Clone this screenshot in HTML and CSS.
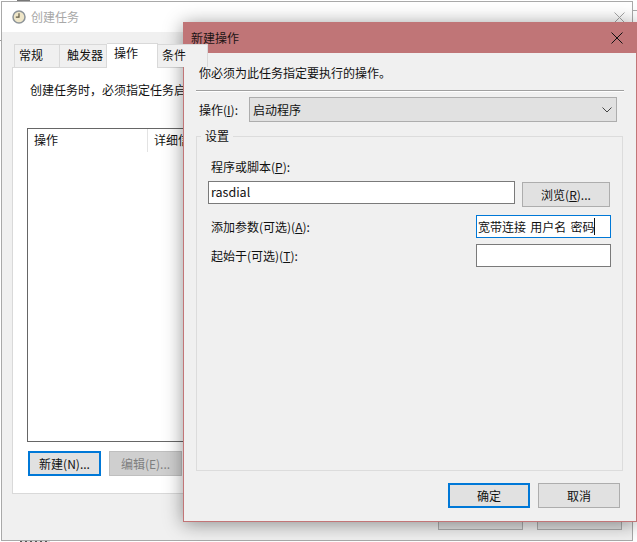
FILE: index.html
```html
<!DOCTYPE html>
<html lang="zh-CN">
<head>
<meta charset="utf-8">
<title>新建操作</title>
<link rel="stylesheet" href="styles.css">
</head>
<body>
<div class="desktop">
  <i class="scrap scrap-top"></i>
  <i class="scrap scrap-left"></i>
  <i class="scrap scrap-right"></i>
  <i class="scrap scrap-bottom"></i>
  <section class="window back">
    <header class="back-title">
      <svg class="clock" width="14" height="14" viewBox="0 0 14 14"><circle cx="7" cy="7" r="6" fill="#efe6c8" stroke="#8d9499" stroke-width="1.5"/><path d="M7 3.200V7.200H3.800" fill="none" stroke="#5f5a45" stroke-width="1.200"/></svg>
      <span class="back-name">创建任务</span>
      <svg class="x x-back" width="11" height="11" viewBox="0 0 11 11"><path d="M.5.5l10 10M10.500.5l-10 10" stroke="#a6a6a6" fill="none"/></svg>
    </header>
    <div class="back-body">
      <nav class="tabs">
        <span class="tab t1">常规</span>
        <span class="tab t2">触发器</span>
        <span class="tab active">操作</span>
        <span class="tab t4">条件</span>
      </nav>
      <div class="panel">
        <p class="hint">创建任务时，必须指定任务启动时发生的操作。</p>
        <div class="list">
          <div class="list-head">
            <span class="col c1">操作</span>
            <span class="col c2">详细信息</span>
          </div>
        </div>
        <div class="list-actions">
          <span class="btn focus new">新建(N)...</span>
          <span class="btn disabled edit">编辑(E)...</span>
        </div>
      </div>
      <div class="back-foot">
        <span class="btn foot-btn"></span>
        <span class="btn foot-btn"></span>
      </div>
    </div>
  </section>

  <section class="window dialog">
    <header class="dlg-title">
      <span>新建操作</span>
      <svg class="x" width="12" height="12" viewBox="0 0 12 12"><path d="M.5.5l11 11M11.500.5l-11 11" stroke="#111" fill="none"/></svg>
    </header>
    <div class="dlg-body">
      <p class="intro">你必须为此任务指定要执行的操作。</p>
      <div class="rule"></div>
      <div class="action-row">
        <label class="action-label">操作(<u>I</u>):</label>
        <div class="select"><span>启动程序</span>
          <svg width="10" height="6" viewBox="0 0 10 6"><path d="M.5.5L5 5 9.500.5" fill="none" stroke="#444"/></svg>
        </div>
      </div>
      <fieldset class="group">
        <legend>设置</legend>
        <div class="prog-label">程序或脚本(<u>P</u>):</div>
        <div class="prog-row">
          <div class="field prog">rasdial</div>
          <span class="btn browse">浏览(<u>R</u>)...</span>
        </div>
        <div class="arg-row">
          <span>添加参数(可选)(<u>A</u>):</span>
          <div class="field small active-field">宽带连接 用户名 密码<i class="caret"></i></div>
        </div>
        <div class="arg-row second">
          <span>起始于(可选)(<u>T</u>):</span>
          <div class="field small"></div>
        </div>
      </fieldset>
      <div class="dlg-foot">
        <span class="btn focus ok">确定</span>
        <span class="btn ok">取消</span>
      </div>
    </div>
  </section>
</div>
</body>
</html>
```
FILE: styles.css
```css
* { box-sizing: border-box; }
html, body { margin: 0; padding: 0; }
body {
  width: 637px; height: 542px; overflow: hidden; background: #fff; color: #111;
  font: 12px/16px "Noto Sans CJK SC", "Noto Sans", sans-serif;
}
.desktop { position: relative; width: 637px; height: 542px; overflow: hidden; }
u { text-decoration-thickness: 1px; text-underline-offset: 1px; }
.scrap { position: absolute; display: block; }
.scrap-top { left: 17px; top: 0; width: 13px; height: 1px; background: #777; }
.scrap-left { left: 0; top: 40px; width: 1px; height: 1px; background: #999; }
.scrap-right { left: 633px; top: 10px; width: 4px; height: 1px; background: #aaa; }
.scrap-bottom { left: 20px; top: 541px; width: 30px; height: 1px; background: repeating-linear-gradient(90deg, #555 0 2px, #ddd 2px 5px); }
.window { position: absolute; }

.back { left: 1px; top: 1px; width: 632px; height: 540px; border: 1px solid #a9a9a9; background: #f0f0f0; display: flex; flex-direction: column; }
.back-title { height: 30px; flex: none; background: #fff; display: flex; align-items: center; padding-left: 10px; gap: 5px; position: relative; }
.back-name { color: #a8a8a8; font-size: 12px; }
.x-back { position: absolute; right: 7px; top: 10px; }
.back-body { flex: 1; display: flex; flex-direction: column; padding: 11px 11px 0 10px; }
.tabs { display: flex; height: 24px; align-items: flex-end; padding-left: 2px; position: relative; z-index: 1; }
.tab { height: 23px; border: 1px solid #d9d9d9; border-bottom: 0; border-left: 0; background: #f0f0f0; padding: 2px 0 0 6px; }
.t1 { width: 46px; border-left: 1px solid #d9d9d9; padding-left: 4px; }
.t2 { width: 47px; padding-left: 7px; }
.tab.active { width: 51px; height: 25px; background: #fff; padding-top: 1px; padding-left: 7px; margin-bottom: -1px; }
.t4 { width: 50px; padding-left: 4px; }
.panel { height: 427px; background: #fff; border: 1px solid #d9d9d9; padding: 14px 15px 0 14px; display: flex; flex-direction: column; }
.hint { margin: 0 0 30px 3px; height: 16px; white-space: nowrap; overflow: hidden; }
.list { height: 314px; border: 1px solid #666; background: #fff; }
.list-head { display: flex; height: 23px; }
.col { padding: 3px 0 0 6px; }
.c1 { width: 120px; border-right: 1px solid #e3e3e3; }
.list-actions { display: flex; gap: 8px; margin-top: 9px; padding-left: 1px; }
.btn { display: flex; align-items: center; justify-content: center; background: #e1e1e1; border: 1px solid #adadad; flex: none; }
.new, .edit { width: 73px; height: 25px; }
.focus { border: 2px solid #0078d7; }
.disabled { color: #7f7f7f; background: #cfcfcf; border-color: #bfbfbf; }
.back-foot { display: flex; justify-content: flex-end; gap: 14px; padding: 11px 0 0; margin-right: -1px; }
.foot-btn { width: 85px; height: 25px; }

.dialog { left: 183px; top: 22px; width: 454px; height: 500px; background: #f0f0f0; border: 1px solid #c27577; border-top: 0; box-shadow: 0 2px 18px rgba(0,0,0,.42); display: flex; flex-direction: column; }
.dlg-title { height: 31px; flex: none; margin: 0 -1px; background: #c07577; display: flex; align-items: center; justify-content: space-between; padding: 0 14px 0 8px; color: #1c1414; }
.dlg-body { flex: 1; display: flex; flex-direction: column; padding: 12px; }
.intro { margin: 0 0 0 3px; height: 16px; }
.rule { height: 2px; margin-top: 9px; background: linear-gradient(#a0a0a0 1px, #fff 1px); }
.action-row { display: flex; align-items: center; margin-top: 5px; padding-left: 3px; height: 25px; }
.action-label { width: 50px; flex: none; }
.select { width: 368px; height: 25px; background: #e1e1e1; border: 1px solid #adadad; display: flex; align-items: center; justify-content: space-between; padding: 0 4px 0 3px; }
.group { margin: 6px 0 0; padding: 0 0 0 12px; border: 1px solid #dcdcdc; height: 343px; min-width: 0; width: 427px; }
.group legend { margin-left: -8px; padding: 0 4px; height: 16px; line-height: 16px; }
.prog-label { margin: 15px 0 0 2px; height: 16px; }
.prog-row { display: flex; gap: 7px; margin-top: 6px; margin-left: -1px; }
.field { background: #fff; border: 1px solid #7a7a7a; height: 23px; }
.prog { width: 307px; padding: 2px 2px 0; font-size: 12.5px; }
.browse { width: 88px; height: 25px; margin-top: 1px; }
.arg-row { display: flex; justify-content: space-between; align-items: center; margin: 8px 0 0 2px; width: 400px; }
.arg-row.second { margin-top: 6px; }
.small { width: 135px; display: flex; align-items: center; padding-left: 1px; white-space: pre; word-spacing: 1.5px; }
.active-field { border-color: #0078d7; }
.caret { display: inline-block; width: 1px; height: 17px; background: #111; }
.dlg-foot { display: flex; justify-content: flex-end; gap: 8px; margin-top: 12px; margin-right: 4px; }
.ok { width: 82px; height: 25px; }
```
